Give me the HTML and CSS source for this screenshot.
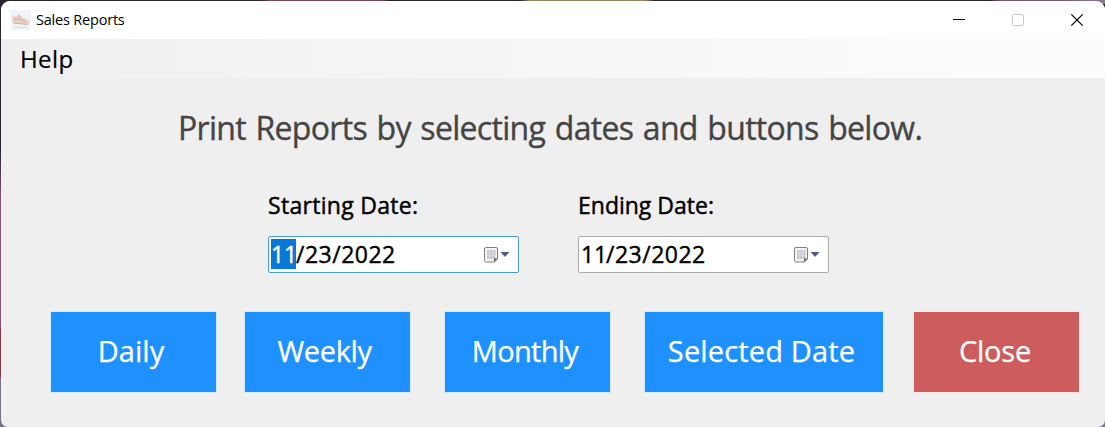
FILE: index.html
```html
<!DOCTYPE html>
<html lang="en">
<head>
<meta charset="utf-8">
<title>Sales Reports</title>
<link rel="stylesheet" href="styles.css">
</head>
<body>
<div class="window">
  <header class="titlebar">
    <svg class="app-icon" width="20" height="20" viewBox="0 0 20 20">
      <rect width="20" height="20" fill="#eef5f9"/>
      <path d="M1 8L2 5L5 7L8 4L11 7L17 10Q20 12 17 14L3 13L1 10Z" fill="#edcfca"/>
      <path d="M2 13L17 14.5M3 9L10 9.5L15 12M7 6L9 8" fill="none" stroke="#dba9a3" stroke-width="1"/>
      <path d="M4 17.5H16" stroke="#d3dfe8"/>
    </svg>
    <span class="title">Sales Reports</span>
    <div class="controls">
      <svg width="14" height="14" viewBox="0 0 14 14"><path d="M1 6.5H13" stroke="#000"/></svg>
      <svg width="14" height="14" viewBox="0 0 14 14"><rect x="1.5" y="1.5" width="11" height="11" rx="1" fill="none" stroke="#c8c8c8"/></svg>
      <svg width="14" height="14" viewBox="0 0 14 14"><path d="M1.3 1.3L12.7 12.7M12.7 1.3L1.3 12.7" stroke="#000" stroke-width="1.2"/></svg>
    </div>
  </header>
  <nav class="menu"><span class="help">Help</span></nav>
  <main class="content">
    <h1 class="heading">Print Reports by selecting dates and buttons below.</h1>
    <div class="dates">
      <div class="field">
        <label class="label starting">Starting Date:</label>
        <div class="picker focused">
          <span class="date"><span class="selected">11</span>/23/2022</span>
          <svg class="calendar" width="27" height="18" viewBox="0 0 27 18">
            <path d="M2 1.5H12Q13.5 1.5 13.5 3V13L10.5 16H2Q.5 16 .5 14.5V3Q.5 1.5 2 1.5Z" fill="#f7f5f3" stroke="#837d78"/>
            <path d="M3 4H11.5V13H3Z" fill="#c3c8d2"/>
            <path d="M3 6.5H12M3 9.5H12M5.5 4V13M8.5 4V13" stroke="#dde1e8" stroke-width=".7"/>
            <path d="M10 16V12.5H13.5Z" fill="#625d59"/>
            <path d="M16.5 6H25.5L21 11Z" fill="#4c5d8b"/>
          </svg>
        </div>
      </div>
      <div class="field">
        <label class="label ending">Ending Date:</label>
        <div class="picker">
          <span class="date"><span class="part">11</span>/23/2022</span>
          <svg class="calendar" width="27" height="18" viewBox="0 0 27 18">
            <path d="M2 1.5H12Q13.5 1.5 13.5 3V13L10.5 16H2Q.5 16 .5 14.5V3Q.5 1.5 2 1.5Z" fill="#f7f5f3" stroke="#837d78"/>
            <path d="M3 4H11.5V13H3Z" fill="#c3c8d2"/>
            <path d="M3 6.5H12M3 9.5H12M5.5 4V13M8.5 4V13" stroke="#dde1e8" stroke-width=".7"/>
            <path d="M10 16V12.5H13.5Z" fill="#625d59"/>
            <path d="M16.5 6H25.5L21 11Z" fill="#4c5d8b"/>
          </svg>
        </div>
      </div>
    </div>
    <div class="actions">
      <button class="btn daily">Daily</button>
      <button class="btn weekly">Weekly</button>
      <button class="btn monthly">Monthly</button>
      <button class="btn chosen">Selected Date</button>
      <button class="btn close">Close</button>
    </div>
  </main>
</div>
</body>
</html>
```
FILE: styles.css
```css
* { box-sizing: border-box; }
body {
  margin: 0;
  height: 427px;
  overflow: hidden;
  padding: 1px 0 0 1px;
  background:
    linear-gradient(90deg, #29252f 0 260px, #754758 270px 380px, #29252f 390px 520px, #9b855d 530px 645px, #29252f 655px 990px, #765b73 1000px 1060px, #8a7790) top / 100% 4px no-repeat,
    linear-gradient(#29252f 0 150px, #8b5275 200px 327px, #8b3944 330px 375px, #777383 380px);
  font-family: "Open Sans", "Noto Sans", sans-serif;
}
.window {
  height: 426px;
  background: #efefef;
  border-radius: 9px 9px 7px 7px;
  overflow: hidden;
}
.titlebar {
  height: 38px;
  background: #fff;
  display: flex;
  align-items: center;
  padding: 0 21px 0 10px;
}
.title { margin-left: 5px; padding-bottom: 1px; font-size: 14.5px; color: #000; letter-spacing: -.2px; }
.controls { margin-left: auto; display: flex; gap: 45px; }
.menu {
  height: 39px;
  padding-left: 19px;
  background: linear-gradient(90deg, #efefef, #fcfcfc 90%);
  font-size: 24px;
  line-height: 39px;
  letter-spacing: .4px;
  -webkit-text-stroke: .2px #000;
}
.heading {
  margin: 0;
  padding: 26px 0 0 177px;
  height: 113px;
  font-size: 32px;
  line-height: 48px;
  font-weight: 400;
  color: #444;
  letter-spacing: -.7px;
  word-spacing: 2px;
  white-space: nowrap;
  -webkit-text-stroke: .35px #444;
}
.dates { display: flex; gap: 59px; padding-left: 267px; height: 120px; }
.field { width: 251px; }
.label { display: block; height: 45px; line-height: 28px; font-size: 23px; color: #000; white-space: nowrap; -webkit-text-stroke: .45px #000; }
.starting { letter-spacing: .3px; }
.picker {
  height: 37px;
  border: 1px solid #aaa;
  border-radius: 2px;
  background: #fff;
  display: flex;
  align-items: center;
  justify-content: space-between;
  padding: 0 7px 0 2px;
}
.focused { border-color: #4698d6; }
.date { padding-bottom: 1px; font-size: 23px; line-height: 30px; color: #000; letter-spacing: .5px; -webkit-text-stroke: .4px currentColor; }
.selected, .part { display: inline-block; width: 25px; height: 30px; letter-spacing: -.2px; }
.selected { background: #0878d7; color: #fff; }
.actions { display: flex; padding-left: 49px; }
.btn {
  width: 167px;
  height: 82px;
  padding: 0 5px 2px 0;
  border: 1px solid #d5efff;
  background: #1e90ff;
  color: #fff;
  font: 400 29px/40px "Open Sans", "Noto Sans", sans-serif;
  white-space: nowrap;
  -webkit-text-stroke: .25px #fff;
}
.weekly { margin-left: 27px; padding-right: 6px; letter-spacing: -.4px; }
.monthly { margin-left: 33px; letter-spacing: -.7px; }
.chosen { margin-left: 33px; width: 240px; letter-spacing: .15px; }
.close { margin-left: 29px; padding-right: 3px; letter-spacing: -.2px; background: #cd5c5c; border-color: #ffe6e4; }
```
